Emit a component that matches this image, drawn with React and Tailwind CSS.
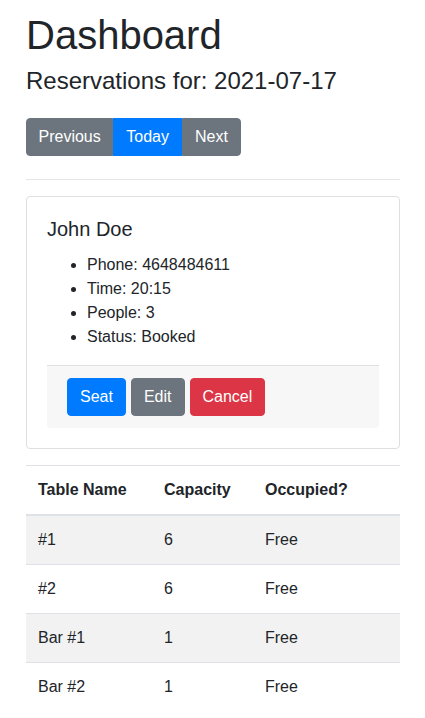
const tables = [
  { name: '#1', capacity: 6, status: 'Free' },
  { name: '#2', capacity: 6, status: 'Free' },
  { name: 'Bar #1', capacity: 1, status: 'Free' },
  { name: 'Bar #2', capacity: 1, status: 'Free' },
]

function App() {
  return (
    <div className="min-h-[718px] bg-white pl-[26px] pr-[25px] pt-[11px] font-['Liberation_Sans',Arial,sans-serif] text-base leading-6 text-[#212529]">
      <h1 className="mb-2 text-[40px] leading-[48px] font-normal">Dashboard</h1>
      <h4 className="mb-0 text-[24px] leading-[28.8px] font-normal">Reservations for: 2021-07-17</h4>

      <div className="mt-[22px] flex">
        <button type="button" className="h-[38px] rounded-l-[4px] border border-[#6c757d] bg-[#6c757d] px-[11.5px] text-white">
          Previous
        </button>
        <button type="button" className="h-[38px] border border-[#007bff] bg-[#007bff] px-3 text-white">
          Today
        </button>
        <button type="button" className="h-[38px] rounded-r-[4px] border border-[#6c757d] bg-[#6c757d] px-3 text-white">
          Next
        </button>
      </div>

      <hr className="mt-[23px] mb-4 border-t border-[#e6e6e6]" />

      <div className="rounded-[4px] border border-[#dfdfdf] p-5">
        <h5 className="mb-3 text-[20px] leading-[24px] font-normal">John Doe</h5>
        <ul className="mb-4 list-disc pl-10">
          <li>Phone: 4648484611</li>
          <li>Time: 20:15</li>
          <li>People: 3</li>
          <li>Status: Booked</li>
        </ul>
        <div className="flex gap-[5px] rounded-b-[4px] border-t border-[#dfdfdf] bg-[#f7f7f7] px-5 pt-3 pb-3">
          <button type="button" className="h-[38px] rounded-[4px] border border-[#007bff] bg-[#007bff] px-3 text-white">
            Seat
          </button>
          <button type="button" className="h-[38px] rounded-[4px] border border-[#6c757d] bg-[#6c757d] px-3 text-white">
            Edit
          </button>
          <button type="button" className="h-[38px] rounded-[4px] border border-[#dc3545] bg-[#dc3545] px-3 text-white">
            Cancel
          </button>
        </div>
      </div>

      <table className="mt-4 w-full border-collapse text-left">
        <thead>
          <tr>
            <th className="w-[126px] border-t border-b-2 border-[#dee2e6] p-3 font-bold">Table Name</th>
            <th className="w-[101px] border-t border-b-2 border-[#dee2e6] p-3 font-bold">Capacity</th>
            <th className="border-t border-b-2 border-[#dee2e6] p-3 font-bold">Occupied?</th>
          </tr>
        </thead>
        <tbody>
          {tables.map((table, index) => (
            <tr key={table.name} className={index % 2 === 0 ? 'bg-[#f2f2f2]' : 'bg-white'}>
              <td className="border-t border-[#dee2e6] p-3">{table.name}</td>
              <td className="border-t border-[#dee2e6] p-3">{table.capacity}</td>
              <td className="border-t border-[#dee2e6] p-3">{table.status}</td>
            </tr>
          ))}
        </tbody>
      </table>
    </div>
  )
}

export default App
